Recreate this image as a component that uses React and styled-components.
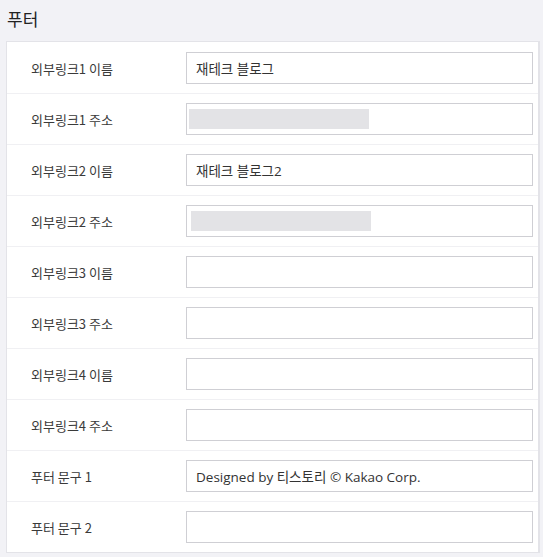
import React from 'react';
import styled, { createGlobalStyle } from 'styled-components';

const GlobalStyle = createGlobalStyle`
    body {
        margin: 0;
        background: #f2f2f6;
        font-family: "Noto Sans CJK KR", "Noto Sans", sans-serif;
        color: #333;
    }
`;

const Page = styled.div`
    padding: 7px 3px 5px 6px;
`;

const Title = styled.h2`
    margin: 0 0 10px 1px;
    font-size: 17px;
    font-weight: 400;
    line-height: 24px;
    color: #222;
`;

const Card = styled.div`
    background: #fff;
    border: 1px solid #e3e3e8;
    border-right-width: 2px;
`;

const Row = styled.div`
    display: grid;
    grid-template-columns: 179px 1fr;
    align-items: center;
    height: 51px;
    padding-right: 5px;
    box-sizing: border-box;
    border-top: 1px solid ${p => (p.first ? 'transparent' : '#f0f0f3')};
`;

const Label = styled.label`
    padding-left: 24px;
    font-size: 13px;
    color: #3a3a3a;
`;

const InputBox = styled.div`
    position: relative;
    height: 32px;
    border: 1px solid #cfcfd4;
    box-sizing: border-box;
    display: flex;
    align-items: center;
    padding-left: 9px;
    font-size: 13.5px;
    color: #333;
    font-family: "Open Sans", "Noto Sans CJK KR", sans-serif;
`;

const Blur = styled.div`
    position: absolute;
    left: ${p => p.left}px;
    top: 5px;
    width: 180px;
    height: 20px;
    background: #e3e3e6;
    filter: blur(0.6px);
`;

const rows = [
    { label: '외부링크1 이름', value: '재테크 블로그' },
    { label: '외부링크1 주소', blur: 2 },
    { label: '외부링크2 이름', value: '재테크 블로그2' },
    { label: '외부링크2 주소', blur: 4 },
    { label: '외부링크3 이름' },
    { label: '외부링크3 주소' },
    { label: '외부링크4 이름' },
    { label: '외부링크4 주소' },
    { label: '푸터 문구 1', value: 'Designed by 티스토리 © Kakao Corp.' },
    { label: '푸터 문구 2' },
];

export default function App() {
    return (
        <>
            <GlobalStyle />
            <Page>
                <Title>푸터</Title>
                <Card>
                    {rows.map((r, i) => (
                        <Row key={r.label} first={i === 0}>
                            <Label>{r.label}</Label>
                            <InputBox>
                                {r.value}
                                {r.blur && <Blur left={r.blur} />}
                            </InputBox>
                        </Row>
                    ))}
                </Card>
            </Page>
        </>
    );
}
